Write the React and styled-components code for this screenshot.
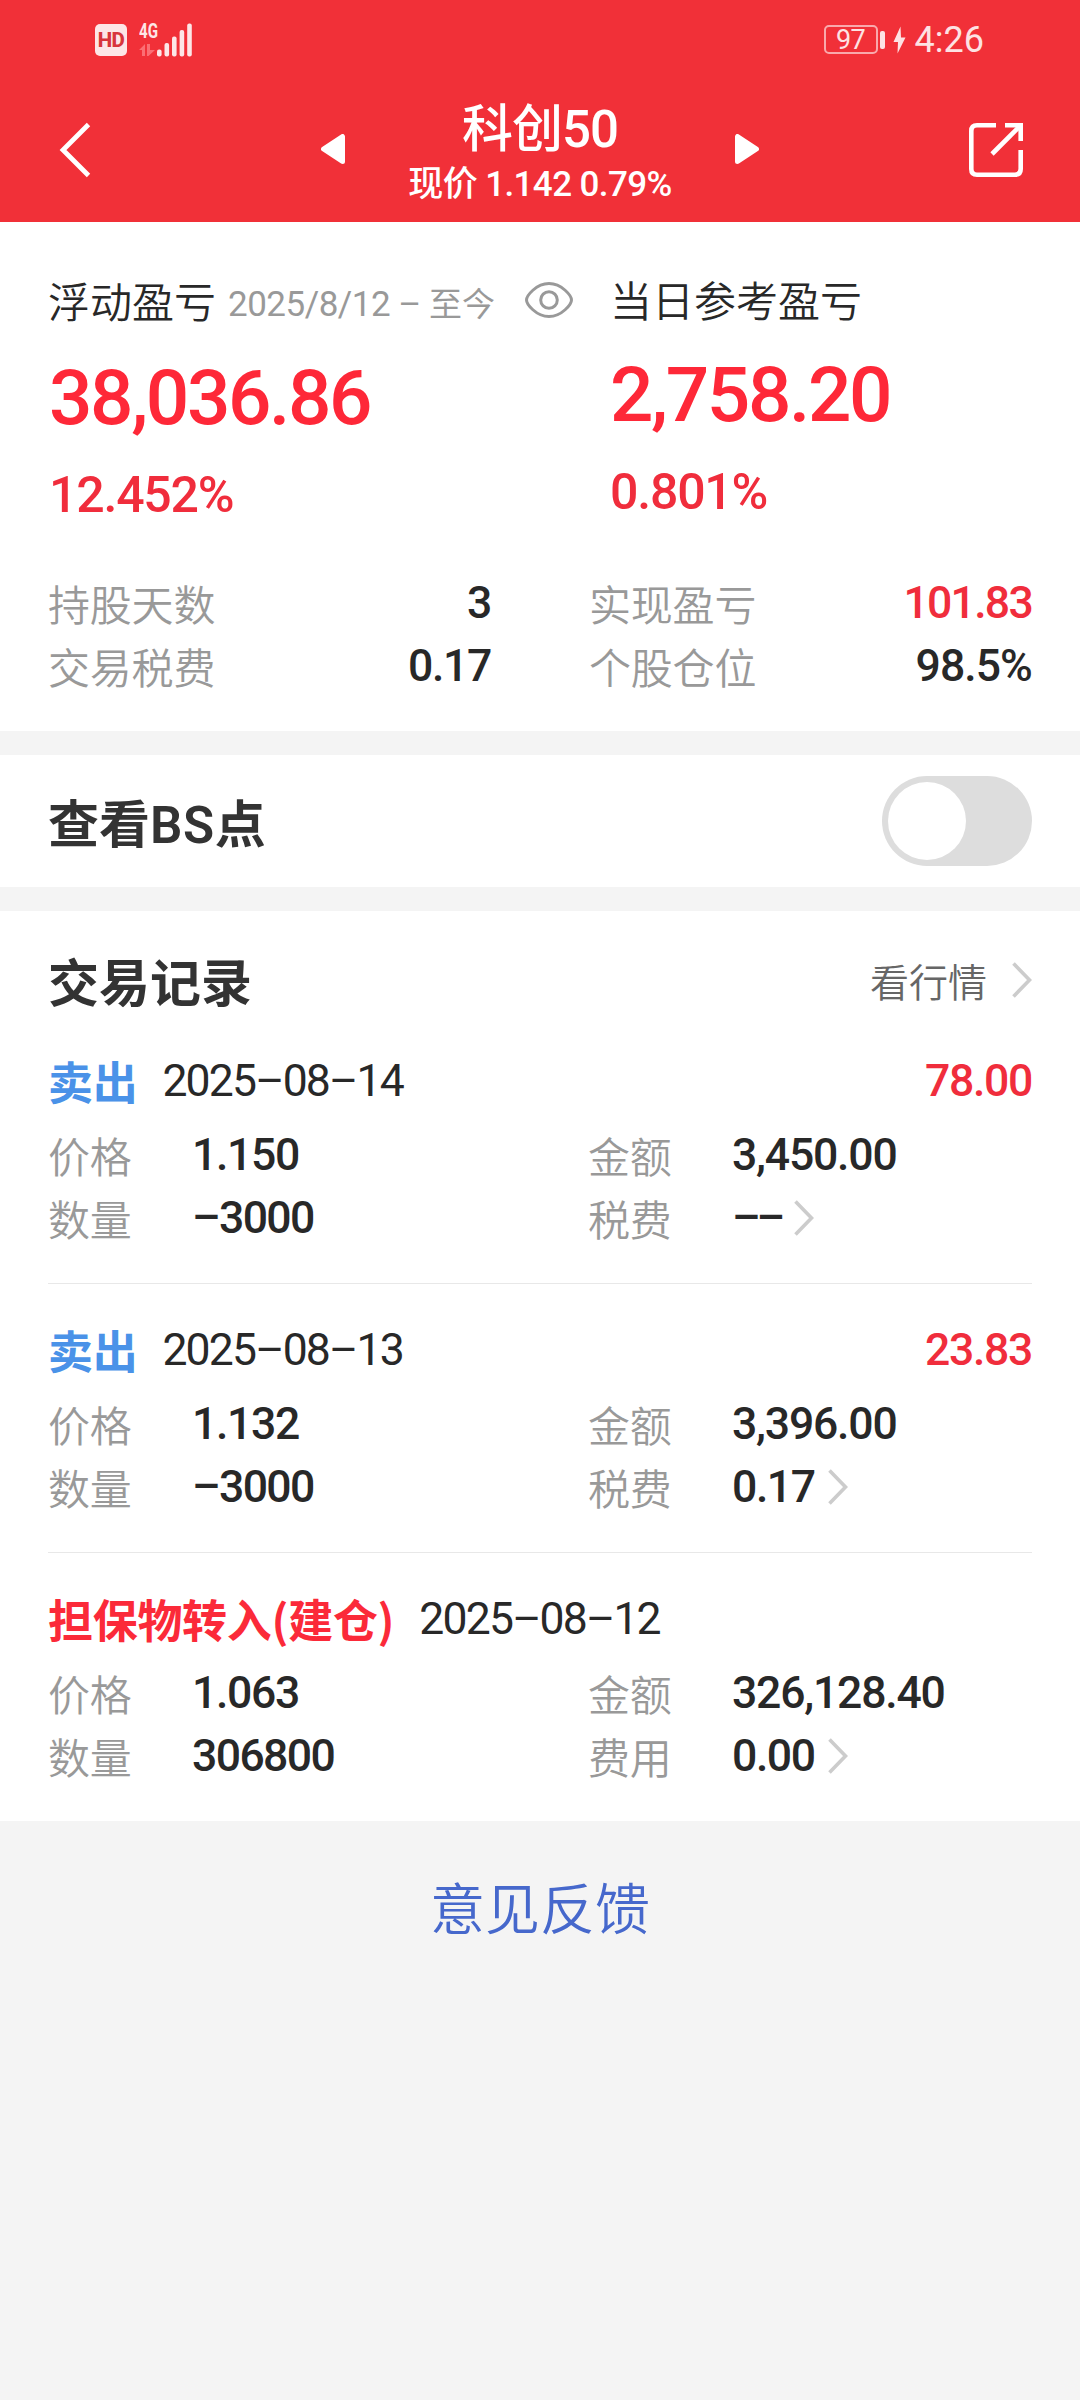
import React, { Component } from 'react';
import styled, { createGlobalStyle } from 'styled-components';

const GlobalStyle = createGlobalStyle`
* {
box-sizing: border-box;
}
body {
margin: 0;
background: #f4f4f4;
font-family: "Noto Sans CJK SC", sans-serif;
color: #282828;
}
`;

const Page = styled.div`
width: 1080px;
min-height: 2400px;
background: #f4f4f4;
`;

const Header = styled.header`
height: 222px;
background: #f13038;
color: #fff;
`;

const StatusBar = styled.div`
display: flex;
align-items: center;
justify-content: space-between;
height: 79px;
padding: 0 96px 0 95px;
`;

const StatusGroup = styled.div`
display: flex;
align-items: center;
`;

const HdBadge = styled.div`
width: 32px;
height: 32px;
margin-right: 12px;
border-radius: 5px;
background: #fde6e7;
color: #d8353c;
font: 800 20.5px/32px Roboto, sans-serif;
letter-spacing: -0.6px;
text-align: center;
`;

const Battery = styled.div`
width: 54px;
height: 29px;
border: 2px solid #f9a9ac;
border-radius: 5px;
color: #fde2e3;
font: 400 27px/26px Roboto, sans-serif;
letter-spacing: -0.5px;
text-align: center;
`;

const BatteryTip = styled.div`
width: 5px;
height: 18px;
margin: 0 8px 0 2px;
border-radius: 2px;
background: #fde2e3;
`;

const Clock = styled.div`
margin-left: 9px;
color: #fde2e3;
font: 400 36px/40px Roboto, sans-serif;
`;

const NavBar = styled.div`
display: flex;
align-items: center;
justify-content: space-between;
height: 142px;
padding: 0 57px;
`;

const Switcher = styled.div`
display: flex;
align-items: center;
justify-content: space-between;
width: 438px;
`;

const Title = styled.div`
padding-top: 13px;
text-align: center;
white-space: nowrap;
font-family: Roboto, "Noto Sans CJK SC", sans-serif;
font-weight: 500;
`;

const StockName = styled.div`
font-size: 51px;
line-height: 56px;
letter-spacing: -1px;
`;

const StockPrice = styled.div`
font-size: 35px;
line-height: 54px;
letter-spacing: -0.6px;
`;

const Panel = styled.section`
margin-bottom: ${props => props.$last ? '0' : '24px'};
padding: ${props => props.$pad || '0 48px'};
background: #fff;
`;

const Summary = styled.div`
display: grid;
grid-template-columns: 562px 1fr;
align-items: start;
`;

const SummaryLabel = styled.div`
display: flex;
align-items: center;
height: ${props => props.$height};
font-size: 42px;
font-weight: 350;
white-space: nowrap;
`;

const Period = styled.span`
display: flex;
flex-shrink: 0;
align-items: baseline;
width: 309px;
padding: 7px 0 0 12px;
color: #999;
font: 400 35px/46px Roboto, sans-serif;
letter-spacing: -0.5px;
white-space: pre;
`;

const PeriodEnd = styled.span`
font: 400 33px/46px "Noto Sans CJK SC", sans-serif;
letter-spacing: 0;
`;

const BigNumber = styled.div`
height: 90px;
margin-top: 22px;
padding-left: ${props => props.$indent || '0'};
color: #fe2838;
font: 500 76.5px/91px Roboto, sans-serif;
letter-spacing: -2.4px;
`;

const Percent = styled.div`
height: 60px;
margin-top: 21px;
padding-left: ${props => props.$indent || '0'};
color: #f02d3c;
font: 500 50px/62px Roboto, sans-serif;
letter-spacing: -1.2px;
`;

const Stats = styled.div`
display: grid;
grid-template-columns: 443px 443px;
column-gap: 98px;
margin-top: 47px;
`;

const Row = styled.div`
display: flex;
align-items: center;
justify-content: ${props => props.$spread ? 'space-between' : 'flex-start'};
height: 63px;
`;

const Label = styled.span`
width: ${props => props.$width || 'auto'};
color: #999;
font-size: 42px;
font-weight: 350;
line-height: 63px;
letter-spacing: -0.2px;
white-space: nowrap;
`;

const Value = styled.span`
padding-top: 2px;
color: ${props => props.$up ? '#f02d3c' : '#282828'};
font: ${props => props.$weight || 500} 44.5px/61px Roboto, sans-serif;
letter-spacing: ${props => props.$tight || '-1.3px'};
white-space: nowrap;
`;

const Bar = styled.div`
display: flex;
align-items: center;
justify-content: space-between;
height: ${props => props.$height};
`;

const Heading = styled.h2`
margin: 0;
color: #333;
font-size: 51px;
font-weight: 700;
line-height: 70px;
`;

const Latin = styled.span`
font-family: Roboto, sans-serif;
font-size: 51px;
font-weight: 600;
letter-spacing: 0.6px;
line-height: 1;
`;

const Toggle = styled.button`
display: flex;
align-items: center;
width: 150px;
height: 90px;
padding: 0 6px;
border: 0;
border-radius: 45px;
background: #ddd;
justify-content: ${props => props.$on ? 'flex-end' : 'flex-start'};
`;

const Knob = styled.span`
width: 78px;
height: 78px;
border-radius: 50%;
background: #fff;
`;

const QuoteLink = styled.div`
display: flex;
align-items: center;
gap: 25px;
color: #666;
font-size: 39px;
font-weight: 350;
`;

const Record = styled.div`
padding: 34px 0;
border-bottom: 1px solid #e8e8e8;
&:last-child {
border-bottom: 0;
}
`;

const RecordHead = styled.div`
display: flex;
align-items: center;
height: 63px;
margin-bottom: 11px;
`;

const Action = styled.span`
margin-right: 25px;
color: ${props => props.$sell ? '#4a92e8' : '#fb2a39'};
font-size: 45px;
font-weight: 700;
letter-spacing: -0.3px;
line-height: 63px;
`;

const DateText = styled(Value)`
flex: 1;
`;

const RecordGrid = styled.div`
display: grid;
grid-template-columns: 540px 1fr;
`;

const Feedback = styled.div`
padding-top: 44px;
color: #4668cc;
font-size: 55px;
font-weight: 350;
line-height: 80px;
text-align: center;
`;

const records = [
  { action: '卖出', sell: true, date: '2025–08–14', profit: '78.00', price: '1.150', amount: '3,450.00', count: '–3000', feeName: '税费', fee: '––' },
  { action: '卖出', sell: true, date: '2025–08–13', profit: '23.83', price: '1.132', amount: '3,396.00', count: '–3000', feeName: '税费', fee: '0.17' },
  { action: '担保物转入(建仓)', sell: false, date: '2025–08–12', profit: '', price: '1.063', amount: '326,128.40', count: '306800', feeName: '费用', fee: '0.00' },
];

const Chevron = ({ gap }) => (
  <svg width={20 + gap} height="36" viewBox={`${-gap} 0 ${20 + gap} 36`} fill="none">
    <path d="M1.5 1.5L17.5 18L1.5 34.5" stroke="#ccc" strokeWidth="3.6" />
  </svg>
);

const Signal = () => (
  <svg width="54" height="44" viewBox="0 -5 54 44" fill="#fde6e7">
    <text x="0" y="15" fontFamily="Roboto" fontWeight="700" fontSize="20" textLength="19" lengthAdjust="spacingAndGlyphs">4G</text>
    <path d="M0 27L6 21V33H3V27Z M8 21H11V27H16L9.500 33H8Z" fill="#fb6e74" />
    <rect x="18" y="26.500" width="4.600" height="7" rx="2" />
    <rect x="25.500" y="20" width="4.600" height="13.500" rx="2" />
    <rect x="33" y="13.500" width="4.600" height="20" rx="2" />
    <rect x="40.600" y="7" width="4.600" height="26.500" rx="2" />
    <rect x="48.200" y="0.500" width="4.600" height="33" rx="2" />
  </svg>
);

const Bolt = () => (
  <svg width="13" height="28" viewBox="0 0 13 28">
    <path d="M7.500 0.500L0.500 16H5L4.500 27.500L12.500 11.500H8Z" fill="#fde2e3" />
  </svg>
);

const BackIcon = () => (
  <svg width="54" height="56" viewBox="0 0 54 56" fill="none">
    <path d="M31.500 2.500L6 28L31.500 53.500" stroke="#fff" strokeWidth="4.800" />
  </svg>
);

const ShareIcon = () => (
  <svg width="54" height="54" viewBox="0 0 54 54" fill="none" stroke="#fff" strokeWidth="4.600">
    <path d="M27 2.300H8Q2.300 2.300 2.300 8V46Q2.300 51.700 8 51.700H46Q51.700 51.700 51.700 46V27" />
    <path d="M36 2.300H51.700V18" />
    <path d="M51 3L23 31" />
  </svg>
);

const Arrow = ({ right }) => (
  <svg width="24" height="32" viewBox="0 0 24 32">
    <path
      d={right ? 'M2.500 2.500V27.500L21.500 15Z' : 'M21.500 2.500V27.500L2.500 15Z'}
      fill="#fff"
      stroke="#fff"
      strokeWidth="5"
      strokeLinejoin="round"
    />
  </svg>
);

const EyeIcon = () => (
  <svg width="48" height="36" viewBox="0 0 48 36" fill="none" stroke="#999" strokeWidth="3">
    <path d="M1.500 18C1.500 14 11 1.500 24 1.500S46.500 14 46.500 18S37 34.500 24 34.500S1.500 22 1.500 18Z" />
    <circle cx="24" cy="18" r="8.300" />
  </svg>
);

class App extends Component {
  constructor(props) {
    super(props);
    this.state = {
      showPoints: false,
    };
    this.togglePoints = this.togglePoints.bind(this);
  }

  togglePoints() {
    const { showPoints } = this.state;
    this.setState({
      showPoints: !showPoints,
    });
  }

  render() {
    const { showPoints } = this.state;
    return (
      <Page>
        <GlobalStyle />
        <Header>
          <StatusBar>
            <StatusGroup>
              <HdBadge>HD</HdBadge>
              <Signal />
            </StatusGroup>
            <StatusGroup>
              <Battery>97</Battery>
              <BatteryTip />
              <Bolt />
              <Clock>4:26</Clock>
            </StatusGroup>
          </StatusBar>
          <NavBar>
            <BackIcon />
            <Switcher>
              <Arrow />
              <Title>
                <StockName>科创50</StockName>
                <StockPrice>现价 1.142 0.79%</StockPrice>
              </Title>
              <Arrow right />
            </Switcher>
            <ShareIcon />
          </NavBar>
        </Header>

        <Panel $pad="46px 48px 34px">
          <Summary>
            <div>
              <SummaryLabel $height="63px">
                浮动盈亏
                <Period>2025/8/12 – <PeriodEnd>至今</PeriodEnd></Period>
                <EyeIcon />
              </SummaryLabel>
              <BigNumber $indent="1px">38,036.86</BigNumber>
              <Percent $indent="1px">12.452%</Percent>
            </div>
            <div>
              <SummaryLabel $height="60px">当日参考盈亏</SummaryLabel>
              <BigNumber>2,758.20</BigNumber>
              <Percent>0.801%</Percent>
            </div>
          </Summary>
          <Stats>
            <Row $spread><Label>持股天数</Label><Value>3</Value></Row>
            <Row $spread><Label>实现盈亏</Label><Value $up $tight="-1.7px">101.83</Value></Row>
            <Row $spread><Label>交易税费</Label><Value>0.17</Value></Row>
            <Row $spread><Label>个股仓位</Label><Value $tight="-0.9px">98.5%</Value></Row>
          </Stats>
        </Panel>

        <Panel>
          <Bar $height="132px">
            <Heading>查看<Latin>BS</Latin>点</Heading>
            <Toggle $on={showPoints} onClick={this.togglePoints}><Knob /></Toggle>
          </Bar>
        </Panel>

        <Panel $last $pad="34px 48px 0">
          <Bar $height="70px">
            <Heading>交易记录</Heading>
            <QuoteLink>看行情<Chevron gap={0} /></QuoteLink>
          </Bar>
          {records.map(r => (
            <Record key={r.date}>
              <RecordHead>
                <Action $sell={r.sell}>{r.action}</Action>
                <DateText $weight={450} $tight="-1.8px">{r.date}</DateText>
                <Value $up>{r.profit}</Value>
              </RecordHead>
              <RecordGrid>
                <Row><Label $width="144px">价格</Label><Value>{r.price}</Value></Row>
                <Row><Label $width="144px">金额</Label><Value $tight="-1.2px">{r.amount}</Value></Row>
                <Row><Label $width="144px">数量</Label><Value $tight="-1.6px">{r.count}</Value></Row>
                <Row>
                  <Label $width="144px">{r.feeName}</Label>
                  <Value $tight={r.fee === '––' ? '-4px' : '-1.4px'}>{r.fee}</Value>
                  <Chevron gap={13} />
                </Row>
              </RecordGrid>
            </Record>
          ))}
        </Panel>

        <Feedback>意见反馈</Feedback>
      </Page>
    );
  }
}

export default App;
